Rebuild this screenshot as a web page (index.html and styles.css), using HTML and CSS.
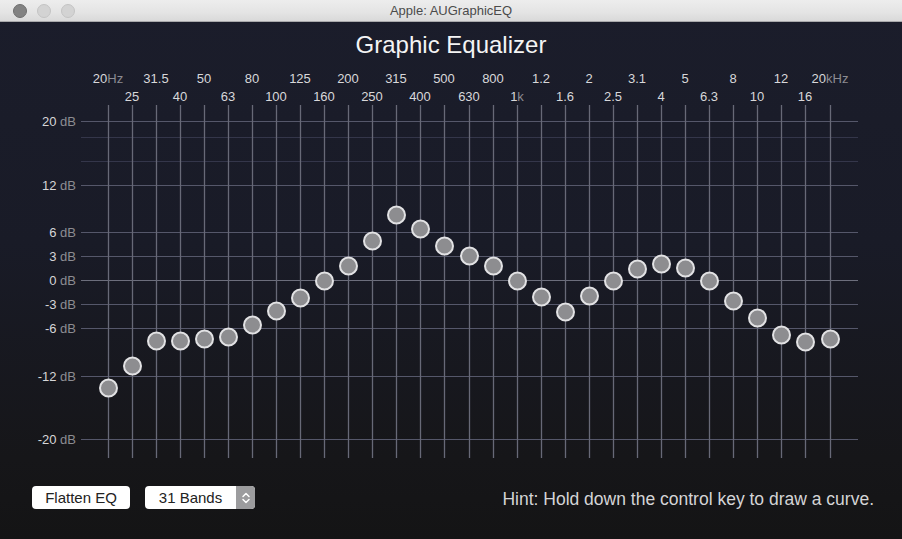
FILE: index.html
```html
<!DOCTYPE html>
<html>
<head>
<meta charset="utf-8">
<link rel="stylesheet" href="styles.css">
</head>
<body>
<div class="window">
  <div class="titlebar">
    <div class="lights">
      <span class="light light-close"></span>
      <span class="light"></span>
      <span class="light"></span>
    </div>
    <div class="wtitle">Apple: AUGraphicEQ</div>
  </div>
  <div class="content">
    <h1 class="heading">Graphic Equalizer</h1>
    <svg class="chart" width="902" height="410" viewBox="0 62 902 410" xmlns="http://www.w3.org/2000/svg">
      <g class="hlines-faint">
        <line x1="81" x2="858" y1="137.5" y2="137.5"/>
        <line x1="81" x2="858" y1="161.5" y2="161.5"/>
      </g>
      <g class="hlines">
        <line x1="81" x2="858" y1="121.5" y2="121.5"/>
        <line x1="81" x2="858" y1="185.5" y2="185.5"/>
        <line x1="81" x2="858" y1="232.5" y2="232.5"/>
        <line x1="81" x2="858" y1="256.5" y2="256.5"/>
        <line class="zero" x1="81" x2="858" y1="280.5" y2="280.5"/>
        <line x1="81" x2="858" y1="304.5" y2="304.5"/>
        <line x1="81" x2="858" y1="328.5" y2="328.5"/>
        <line x1="81" x2="858" y1="376.5" y2="376.5"/>
        <line x1="81" x2="858" y1="439.5" y2="439.5"/>
      </g>
      <g class="db">
        <text x="76" y="126">20 <tspan class="unit">dB</tspan></text>
        <text x="76" y="190">12 <tspan class="unit">dB</tspan></text>
        <text x="76" y="237">6 <tspan class="unit">dB</tspan></text>
        <text x="76" y="261">3 <tspan class="unit">dB</tspan></text>
        <text x="76" y="285">0 <tspan class="unit">dB</tspan></text>
        <text x="76" y="309">-3 <tspan class="unit">dB</tspan></text>
        <text x="76" y="333">-6 <tspan class="unit">dB</tspan></text>
        <text x="76" y="381">-12 <tspan class="unit">dB</tspan></text>
        <text x="76" y="444">-20 <tspan class="unit">dB</tspan></text>
      </g>
      <g class="vlines">
        <line x1="108.5" x2="108.5" y1="105" y2="458"/>
        <line x1="132.5" x2="132.5" y1="105" y2="458"/>
        <line x1="156.5" x2="156.5" y1="105" y2="458"/>
        <line x1="180.5" x2="180.5" y1="105" y2="458"/>
        <line x1="204.5" x2="204.5" y1="105" y2="458"/>
        <line x1="228.5" x2="228.5" y1="105" y2="458"/>
        <line x1="252.5" x2="252.5" y1="105" y2="458"/>
        <line x1="276.5" x2="276.5" y1="105" y2="458"/>
        <line x1="300.5" x2="300.5" y1="105" y2="458"/>
        <line x1="324.5" x2="324.5" y1="105" y2="458"/>
        <line x1="348.5" x2="348.5" y1="105" y2="458"/>
        <line x1="372.5" x2="372.5" y1="105" y2="458"/>
        <line x1="396.5" x2="396.5" y1="105" y2="458"/>
        <line x1="420.5" x2="420.5" y1="105" y2="458"/>
        <line x1="444.5" x2="444.5" y1="105" y2="458"/>
        <line x1="469.5" x2="469.5" y1="105" y2="458"/>
        <line x1="493.5" x2="493.5" y1="105" y2="458"/>
        <line x1="517.5" x2="517.5" y1="105" y2="458"/>
        <line x1="541.5" x2="541.5" y1="105" y2="458"/>
        <line x1="565.5" x2="565.5" y1="105" y2="458"/>
        <line x1="589.5" x2="589.5" y1="105" y2="458"/>
        <line x1="613.5" x2="613.5" y1="105" y2="458"/>
        <line x1="637.5" x2="637.5" y1="105" y2="458"/>
        <line x1="661.5" x2="661.5" y1="105" y2="458"/>
        <line x1="685.5" x2="685.5" y1="105" y2="458"/>
        <line x1="709.5" x2="709.5" y1="105" y2="458"/>
        <line x1="733.5" x2="733.5" y1="105" y2="458"/>
        <line x1="757.5" x2="757.5" y1="105" y2="458"/>
        <line x1="781.5" x2="781.5" y1="105" y2="458"/>
        <line x1="805.5" x2="805.5" y1="105" y2="458"/>
        <line x1="830.5" x2="830.5" y1="105" y2="458"/>
      </g>
      <g class="freq">
        <text x="108" y="83">20<tspan class="unit">Hz</tspan></text>
        <text x="156" y="83">31.5</text>
        <text x="204" y="83">50</text>
        <text x="252" y="83">80</text>
        <text x="300" y="83">125</text>
        <text x="348" y="83">200</text>
        <text x="396" y="83">315</text>
        <text x="444" y="83">500</text>
        <text x="493" y="83">800</text>
        <text x="541" y="83">1.2</text>
        <text x="589" y="83">2</text>
        <text x="637" y="83">3.1</text>
        <text x="685" y="83">5</text>
        <text x="733" y="83">8</text>
        <text x="781" y="83">12</text>
        <text x="830" y="83">20<tspan class="unit">kHz</tspan></text>
        <text x="132" y="101">25</text>
        <text x="180" y="101">40</text>
        <text x="228" y="101">63</text>
        <text x="276" y="101">100</text>
        <text x="324" y="101">160</text>
        <text x="372" y="101">250</text>
        <text x="420" y="101">400</text>
        <text x="469" y="101">630</text>
        <text x="517" y="101">1<tspan class="unit">k</tspan></text>
        <text x="565" y="101">1.6</text>
        <text x="613" y="101">2.5</text>
        <text x="661" y="101">4</text>
        <text x="709" y="101">6.3</text>
        <text x="757" y="101">10</text>
        <text x="805" y="101">16</text>
      </g>
      <g class="knobs">
        <circle cx="108.5" cy="388" r="8.5"/>
        <circle cx="132.5" cy="366" r="8.5"/>
        <circle cx="156.5" cy="341" r="8.5"/>
        <circle cx="180.5" cy="341" r="8.5"/>
        <circle cx="204.5" cy="339" r="8.5"/>
        <circle cx="228.5" cy="337" r="8.5"/>
        <circle cx="252.5" cy="325" r="8.5"/>
        <circle cx="276.5" cy="311" r="8.5"/>
        <circle cx="300.5" cy="298" r="8.5"/>
        <circle cx="324.5" cy="281" r="8.5"/>
        <circle cx="348.5" cy="266" r="8.5"/>
        <circle cx="372.5" cy="241" r="8.5"/>
        <circle cx="396.5" cy="215" r="8.5"/>
        <circle cx="420.5" cy="229" r="8.5"/>
        <circle cx="444.5" cy="246" r="8.5"/>
        <circle cx="469.5" cy="256" r="8.5"/>
        <circle cx="493.5" cy="266" r="8.5"/>
        <circle cx="517.5" cy="281" r="8.5"/>
        <circle cx="541.5" cy="297" r="8.5"/>
        <circle cx="565.5" cy="312" r="8.5"/>
        <circle cx="589.5" cy="296" r="8.5"/>
        <circle cx="613.5" cy="281" r="8.5"/>
        <circle cx="637.5" cy="269" r="8.5"/>
        <circle cx="661.5" cy="264" r="8.5"/>
        <circle cx="685.5" cy="268" r="8.5"/>
        <circle cx="709.5" cy="281" r="8.5"/>
        <circle cx="733.5" cy="301" r="8.5"/>
        <circle cx="757.5" cy="318" r="8.5"/>
        <circle cx="781.5" cy="335" r="8.5"/>
        <circle cx="805.5" cy="342" r="8.5"/>
        <circle cx="830.5" cy="339" r="8.5"/>
      </g>
    </svg>
    <div class="bottom">
      <button class="btn">Flatten EQ</button>
      <div class="popup">
        <span class="popup-label">31 Bands</span>
        <span class="stepper">
          <svg width="10" height="14" viewBox="0 0 10 14"><path d="M2 5.5 L5 2.5 L8 5.5 M2 8.5 L5 11.5 L8 8.5" fill="none" stroke="#fff" stroke-width="1.5" stroke-linecap="round" stroke-linejoin="round"/></svg>
        </span>
      </div>
      <div class="hint">Hint: Hold down the control key to draw a curve.</div>
    </div>
  </div>
</div>
</body>
</html>
```

FILE: styles.css
```css
* { box-sizing: border-box; }
html, body {
  margin: 0;
  padding: 0;
  width: 902px;
  height: 539px;
  overflow: hidden;
  background: #151517;
  font-family: "Liberation Sans", Arial, sans-serif;
}
.window {
  width: 902px;
  height: 539px;
  display: flex;
  flex-direction: column;
  background: linear-gradient(180deg, #1b1d2b 0%, #191b27 45%, #161619 85%, #141415 100%);
}
.titlebar {
  height: 22px;
  flex: 0 0 22px;
  display: flex;
  align-items: center;
  position: relative;
  background: linear-gradient(180deg, #ededed 0%, #e4e4e4 60%, #d9d9d9 100%);
  border-bottom: 1px solid #a9a9ab;
}
.lights {
  display: flex;
  gap: 10px;
  padding-left: 13px;
}
.light {
  width: 14px;
  height: 14px;
  border-radius: 50%;
  background: #d3d3d3;
  border: 1px solid #c4c4c4;
}
.light-close {
  background: #828282;
  border-color: #6e6e6e;
}
.wtitle {
  position: absolute;
  left: 0;
  right: 0;
  top: 0;
  line-height: 22px;
  text-align: center;
  font-size: 13px;
  color: #4b4b4b;
}
.content {
  flex: 1;
  display: flex;
  flex-direction: column;
}
.heading {
  margin: 0;
  height: 40px;
  padding-top: 5px;
  line-height: 35px;
  text-align: center;
  font-weight: normal;
  font-size: 24px;
  color: #f4f4f4;
}
.chart {
  display: block;
  flex: 0 0 410px;
}
.hlines line {
  stroke: #55576a;
  stroke-width: 1;
}
.hlines line.zero {
  stroke: #6c6e7c;
}
.hlines-faint line {
  stroke: #34364a;
  stroke-width: 1;
}
.vlines line {
  stroke: #676977;
  stroke-width: 1.3;
}
.db text {
  font-family: "Liberation Sans", Arial, sans-serif;
  font-size: 13px;
  fill: #d6d6d8;
  text-anchor: end;
}
.freq text {
  font-family: "Liberation Sans", Arial, sans-serif;
  font-size: 13px;
  fill: #d8d8da;
  text-anchor: middle;
}
.unit {
  fill: #8c8c92;
}
.knobs circle {
  fill: #8d8d90;
  stroke: #e2e2e4;
  stroke-width: 2;
}
.bottom {
  flex: 1;
  display: flex;
  align-items: flex-start;
  padding: 14px 28px 0 32px;
}
.btn {
  width: 98px;
  height: 23px;
  margin: 0;
  padding: 0;
  border: none;
  border-radius: 4px;
  background: #ffffff;
  font-family: "Liberation Sans", Arial, sans-serif;
  font-size: 15px;
  color: #222;
  line-height: 23px;
}
.popup {
  margin-left: 15px;
  width: 110px;
  height: 23px;
  display: flex;
  border-radius: 4px;
  background: #ffffff;
  overflow: hidden;
}
.popup-label {
  flex: 1;
  text-align: center;
  font-size: 15px;
  color: #222;
  line-height: 23px;
}
.stepper {
  width: 19px;
  display: flex;
  align-items: center;
  justify-content: center;
  background: #9c9c9e;
}
.hint {
  margin-left: auto;
  margin-top: 2px;
  font-size: 17.5px;
  line-height: 22px;
  color: #d4d4d6;
}
```
